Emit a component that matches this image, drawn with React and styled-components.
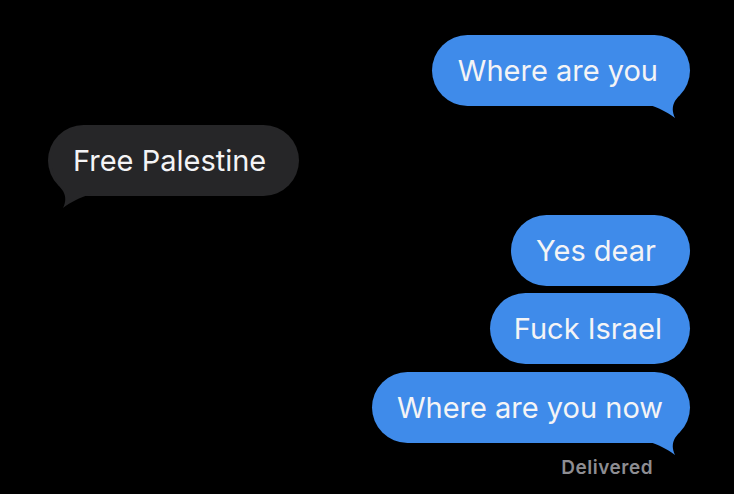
import React from "react";
import styled, { createGlobalStyle } from "styled-components";

const Global = createGlobalStyle`
  html, body { margin: 0; padding: 0; background: #000; }
  body { width: 734px; height: 494px; overflow: hidden; font-family: Inter, "Liberation Sans", sans-serif; }
`;

const Screen = styled.div`
  width: 734px;
  height: 494px;
  background: #000;
  box-sizing: border-box;
  padding: 35px 44px 0 48px;
  display: flex;
  flex-direction: column;
`;

const Row = styled.div`
  display: flex;
  justify-content: ${(p) => (p.$out ? "flex-end" : "flex-start")};
  margin-top: ${(p) => p.$gap || 0}px;
`;

const Bubble = styled.div`
  position: relative;
  height: 71px;
  box-sizing: border-box;
  padding: 0 ${(p) => p.$padR || 29}px 0 ${(p) => p.$padL || 29}px;
  border-radius: 36px;
  display: flex;
  align-items: center;
  background: ${(p) => (p.$out ? "#3f8bea" : "#262628")};
  color: #f4f4f6;
  font-size: 29px;
  letter-spacing: 0;
  white-space: nowrap;
`;

const Label = styled.span`
  position: relative;
  z-index: 1;
`;

const TailSvg = styled.svg`
  position: absolute;
  bottom: -12px;
  ${(p) => (p.$out ? "right: -1px;" : "left: -1px;")}
  width: 46px;
  height: 40px;
  overflow: visible;
`;

function Tail({ out }) {
  const color = out ? "#3f8bea" : "#262628";
  return (
    <TailSvg $out={out} viewBox="0 0 46 40" style={out ? undefined : { transform: "scaleX(-1)" }}>
      <path
        d="M2 26 C14 30 22 34 30 40 C27 34 27 28 30 23 C34 18 38 12 41 0 L2 0 Z"
        fill={color}
      />
    </TailSvg>
  );
}

const Status = styled.div`
  align-self: flex-end;
  margin-top: 13px;
  margin-right: 37px;
  font-size: 19px;
  letter-spacing: 0.5px;
  font-weight: 600;
  color: #8d8d92;
`;

export default function App() {
  return (
    <>
      <Global />
      <Screen>
        <Row $out>
          <Bubble $out $padL={26} $padR={32}>
            <Label>Where are you</Label>
            <Tail out />
          </Bubble>
        </Row>
        <Row $gap={19}>
          <Bubble $padL={25} $padR={33}>
            <Label>Free Palestine</Label>
            <Tail out={false} />
          </Bubble>
        </Row>
        <Row $out $gap={19}>
          <Bubble $out $padL={25} $padR={34}>
            <Label>Yes dear</Label>
          </Bubble>
        </Row>
        <Row $out $gap={7}>
          <Bubble $out $padL={24} $padR={28}>
            <Label>Fuck Israel</Label>
          </Bubble>
        </Row>
        <Row $out $gap={8}>
          <Bubble $out $padL={25} $padR={27}>
            <Label>Where are you now</Label>
            <Tail out />
          </Bubble>
        </Row>
        <Status>Delivered</Status>
      </Screen>
    </>
  );
}
